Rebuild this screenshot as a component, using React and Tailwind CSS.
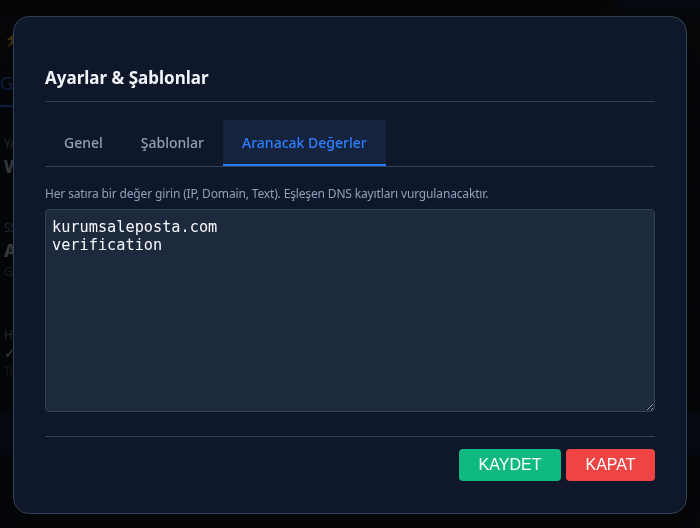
import React, { useState } from "react";

const tabs = ["Genel", "Şablonlar", "Aranacak Değerler"];

const BackgroundPage = () => {
  return (
    <div className="h-[528px] overflow-hidden bg-[#111821] font-['Noto_Sans',sans-serif] text-slate-300">
      {/* top bar */}
      <div className="flex h-[22px] items-start gap-[11px] border-b border-[#1f2733]">
        <div className="h-[10px] flex-1 rounded-b-lg bg-[#0c1118]"></div>
        <div className="h-[10px] w-[83px] rounded-bl-lg bg-[#16253f]"></div>
      </div>
      {/* toolbar */}
      <div className="flex h-[35px] items-center border-b border-[#1f2733] px-1 text-slate-500">
        <span className="text-sm">⚡</span>
      </div>
      {/* tabs */}
      <div className="flex h-[51px] items-end border-b border-[#1f2733]">
        <div className="w-[60px] border-b-2 border-blue-500 pb-2 pl-0 text-lg text-blue-500">Genel</div>
      </div>
      <div className="h-[15px]"></div>
      {/* cards */}
      <div className="flex h-[69px] flex-col justify-center border-y border-[#1f2733] px-1">
        <span className="text-xs text-slate-400">YAYIN</span>
        <span className="text-lg font-bold text-slate-200">WEB</span>
      </div>
      <div className="flex h-[116px] flex-col justify-center border-b border-[#1f2733] px-1">
        <span className="text-xs text-slate-400">SSL</span>
        <span className="text-lg font-bold text-slate-200">Aktif</span>
        <span className="text-xs text-slate-500">Google</span>
      </div>
      <div className="flex h-[90px] flex-col justify-center border-b border-[#1f2733] px-1">
        <span className="text-xs text-slate-400">HTTP</span>
        <span className="text-sm text-slate-200">✓</span>
        <span className="text-xs text-slate-500">Tümü</span>
      </div>
      <div className="h-[13px]"></div>
      <div className="h-[44px] bg-[#16253f]"></div>
    </div>
  );
};

const SettingsModal = () => {
  const [activeTab, setActiveTab] = useState(2);
  const [values, setValues] = useState("kurumsaleposta.com\nverification");

  return (
    <div className="fixed inset-0 z-20 flex items-center justify-center bg-black/75">
      <div className="w-[674px] translate-y-px rounded-2xl border border-slate-700 bg-[#0f172a] px-[31px] pb-8 pt-[49px] font-['Noto_Sans',sans-serif] shadow-2xl">
        {/* Title */}
        <h2 className="border-b border-slate-700 pb-[11px] text-[17px] font-bold leading-6 text-slate-100">
          Ayarlar &amp; Şablonlar
        </h2>

        {/* Tabs */}
        <div className="mt-[18px] flex border-b border-slate-700">
          {tabs.map((t, i) => (
            <button
              key={t}
              onClick={() => setActiveTab(i)}
              className={
                i === activeTab
                  ? "h-[46px] border-b-2 border-blue-500 bg-[#15233f] px-[19px] text-[14px] font-medium text-blue-500"
                  : "h-[46px] border-b-2 border-transparent px-[19px] text-[14px] font-medium text-slate-400"
              }
            >
              {t}
            </button>
          ))}
        </div>

        {/* Content */}
        <p className="mt-[19px] text-[12px] leading-4 tracking-[-0.15px] text-slate-400">
          Her satıra bir değer girin (IP, Domain, Text). Eşleşen DNS kayıtları vurgulanacaktır.
        </p>
        <textarea
          value={values}
          onChange={(e) => setValues(e.target.value)}
          className="mt-[7px] block h-[203px] w-full rounded border border-slate-700 bg-slate-800 px-[6px] pt-[8px] font-['DejaVu_Sans_Mono',monospace] text-[15.25px] leading-[18px] text-slate-50 outline-none"
        ></textarea>

        {/* Footer */}
        <div className="mt-6 flex justify-end gap-[5px] border-t border-slate-700 pt-3">
          <button className="h-8 w-[102px] rounded bg-[#10b981] font-['Liberation_Sans',Arial,sans-serif] text-[16px] text-white">
            KAYDET
          </button>
          <button className="h-8 w-[89px] rounded bg-[#ef4444] font-['Liberation_Sans',Arial,sans-serif] text-[16px] text-white">
            KAPAT
          </button>
        </div>
      </div>
    </div>
  );
};

export default function App() {
  return (
    <div className="relative">
      <BackgroundPage />
      <SettingsModal />
    </div>
  );
}
